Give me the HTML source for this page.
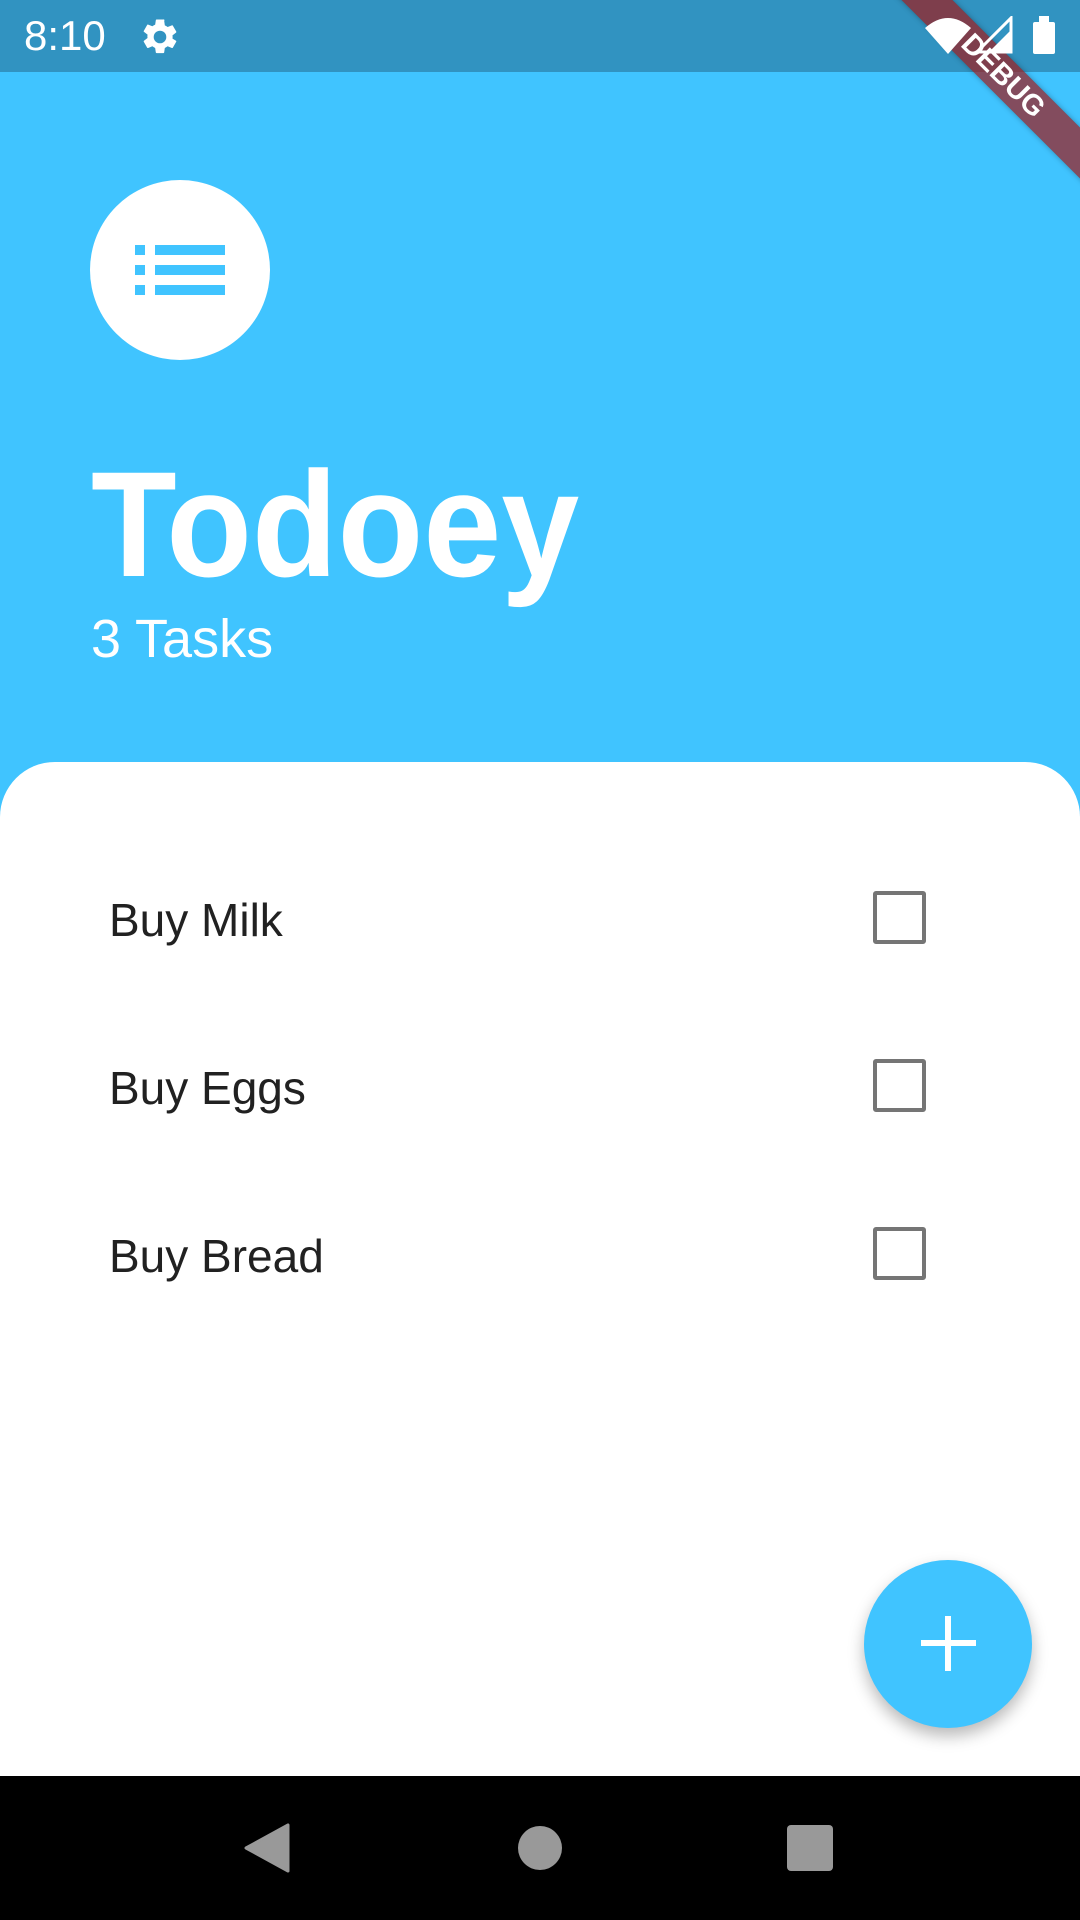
<!DOCTYPE html>
<html><head><meta charset="utf-8"><style>
html,body{margin:0;padding:0;}
body{width:1080px;height:1920px;position:relative;overflow:hidden;background:#40c4ff;font-family:"Liberation Sans",Roboto,sans-serif;}
.abs{position:absolute;}
.status{left:0;top:0;width:1080px;height:72px;background:#3193c1;}
.sheet{left:0;top:762px;width:1080px;height:1014px;background:#fff;border-radius:55px 55px 0 0;}
.item{left:109px;font-size:46px;color:#212121;line-height:1;}
.cb{left:873px;width:45px;height:45px;border:4.5px solid #757575;border-radius:3px;}
.nav{left:0;top:1776px;width:1080px;height:144px;background:#000;}
.ic{z-index:5;}
</style></head><body>
<div class="abs status"></div>
<div class="abs" style="left:24px;top:14px;font-size:42px;color:#fff;line-height:44px;">8:10</div>
<svg class="abs" style="left:139px;top:16px" width="42" height="42" viewBox="0 0 24 24"><path fill="#fff" d="M19.14 12.94c.04-.3.06-.61.06-.94s-.02-.64-.07-.94l2.03-1.58a.49.49 0 0 0 .12-.61l-1.920-3.32a.49.49 0 0 0-.59-.22l-2.39.96c-.5-.38-1.03-.7-1.62-.94l-.36-2.54A.48.48 0 0 0 13.92 2h-3.84c-.24 0-.43.17-.47.41l-.36 2.54c-.59.24-1.130.57-1.62.94l-2.39-.96a.48.48 0 0 0-.59.22L2.74 8.47c-.12.21-.08.47.12.61l2.03 1.58c-.05.3-.09.63-.09.94s.02.64.07.94l-2.03 1.58a.49.49 0 0 0-.12.61l1.92 3.32c.12.22.37.29.59.22l2.39-.96c.5.38 1.030.7 1.62.94l.36 2.54c.05.24.24.41.48.41h3.84c.24 0 .44-.17.47-.41l.36-2.54c.59-.24 1.13-.56 1.62-.94l2.39.96c.22.08.47 0 .59-.22l1.92-3.32c.12-.22.07-.47-.12-.61zM12 15.6A3.6 3.6 0 1 1 12 8.4a3.6 3.6 0 0 1 0 7.2z"/></svg>

<div class="abs" style="left:853px;top:58px;width:300px;height:36px;background:rgba(160,26,26,0.7);transform:rotate(45deg);transform-origin:center;color:#fff;font-weight:bold;font-size:29px;line-height:36px;text-align:center;box-shadow:0 0 6px rgba(0,0,0,0.3);z-index:4">DEBUG</div>

<svg class="abs ic" style="left:925px;top:16px" width="46" height="38" viewBox="0 0 46 38"><path fill="#fff" d="M0 12 Q23 -8 46 12 L23 38 Z"/></svg>
<svg class="abs ic" style="left:975px;top:16px" width="38" height="38" viewBox="0 0 38 38"><path fill="none" stroke="#fff" stroke-width="3" d="M36 2 V36 H2 Z"/><path fill="#fff" d="M36 14 V36 H14 Z"/></svg>
<div class="abs ic" style="left:1033px;top:22px;width:22px;height:32px;background:#fff;border-radius:2px"></div>
<div class="abs ic" style="left:1039px;top:16px;width:10px;height:7px;background:#fff"></div>

<div class="abs" style="left:90px;top:180px;width:180px;height:180px;border-radius:50%;background:#fff"></div>
<svg class="abs" style="left:135px;top:245px" width="90" height="50" viewBox="0 0 90 50"><g fill="#40c4ff"><rect x="0" y="0" width="10" height="10"/><rect x="20" y="0" width="70" height="10"/><rect x="0" y="20" width="10" height="10"/><rect x="20" y="20" width="70" height="10"/><rect x="0" y="40" width="10" height="10"/><rect x="20" y="40" width="70" height="10"/></g></svg>
<div class="abs" style="left:91px;top:449px;font-size:150px;font-weight:bold;color:#fff;line-height:1;transform:scaleX(0.935);transform-origin:left top;">Todoey</div>
<div class="abs" style="left:91px;top:612px;font-size:54px;color:#fff;line-height:1">3 Tasks</div>

<div class="abs sheet"></div>
<div class="abs item" style="top:897px">Buy Milk</div>
<div class="abs cb" style="top:891px"></div>
<div class="abs item" style="top:1065px">Buy Eggs</div>
<div class="abs cb" style="top:1059px"></div>
<div class="abs item" style="top:1233px">Buy Bread</div>
<div class="abs cb" style="top:1227px"></div>

<div class="abs" style="left:864px;top:1560px;width:168px;height:168px;border-radius:50%;background:#40c4ff;box-shadow:0 8px 16px rgba(0,0,0,0.28)"></div>
<div class="abs" style="left:921px;top:1640px;width:55px;height:6px;background:#fff"></div>
<div class="abs" style="left:945px;top:1616px;width:6px;height:55px;background:#fff"></div>

<div class="abs nav"></div>
<svg class="abs" style="left:244px;top:1823px" width="46" height="50" viewBox="0 0 46 50"><path fill="#999" d="M44 2 V48 L2 25 Z" stroke="#999" stroke-width="3" stroke-linejoin="round"/></svg>
<div class="abs" style="left:518px;top:1826px;width:44px;height:44px;border-radius:50%;background:#999"></div>
<div class="abs" style="left:787px;top:1825px;width:46px;height:46px;border-radius:4px;background:#999"></div>
</body></html>
